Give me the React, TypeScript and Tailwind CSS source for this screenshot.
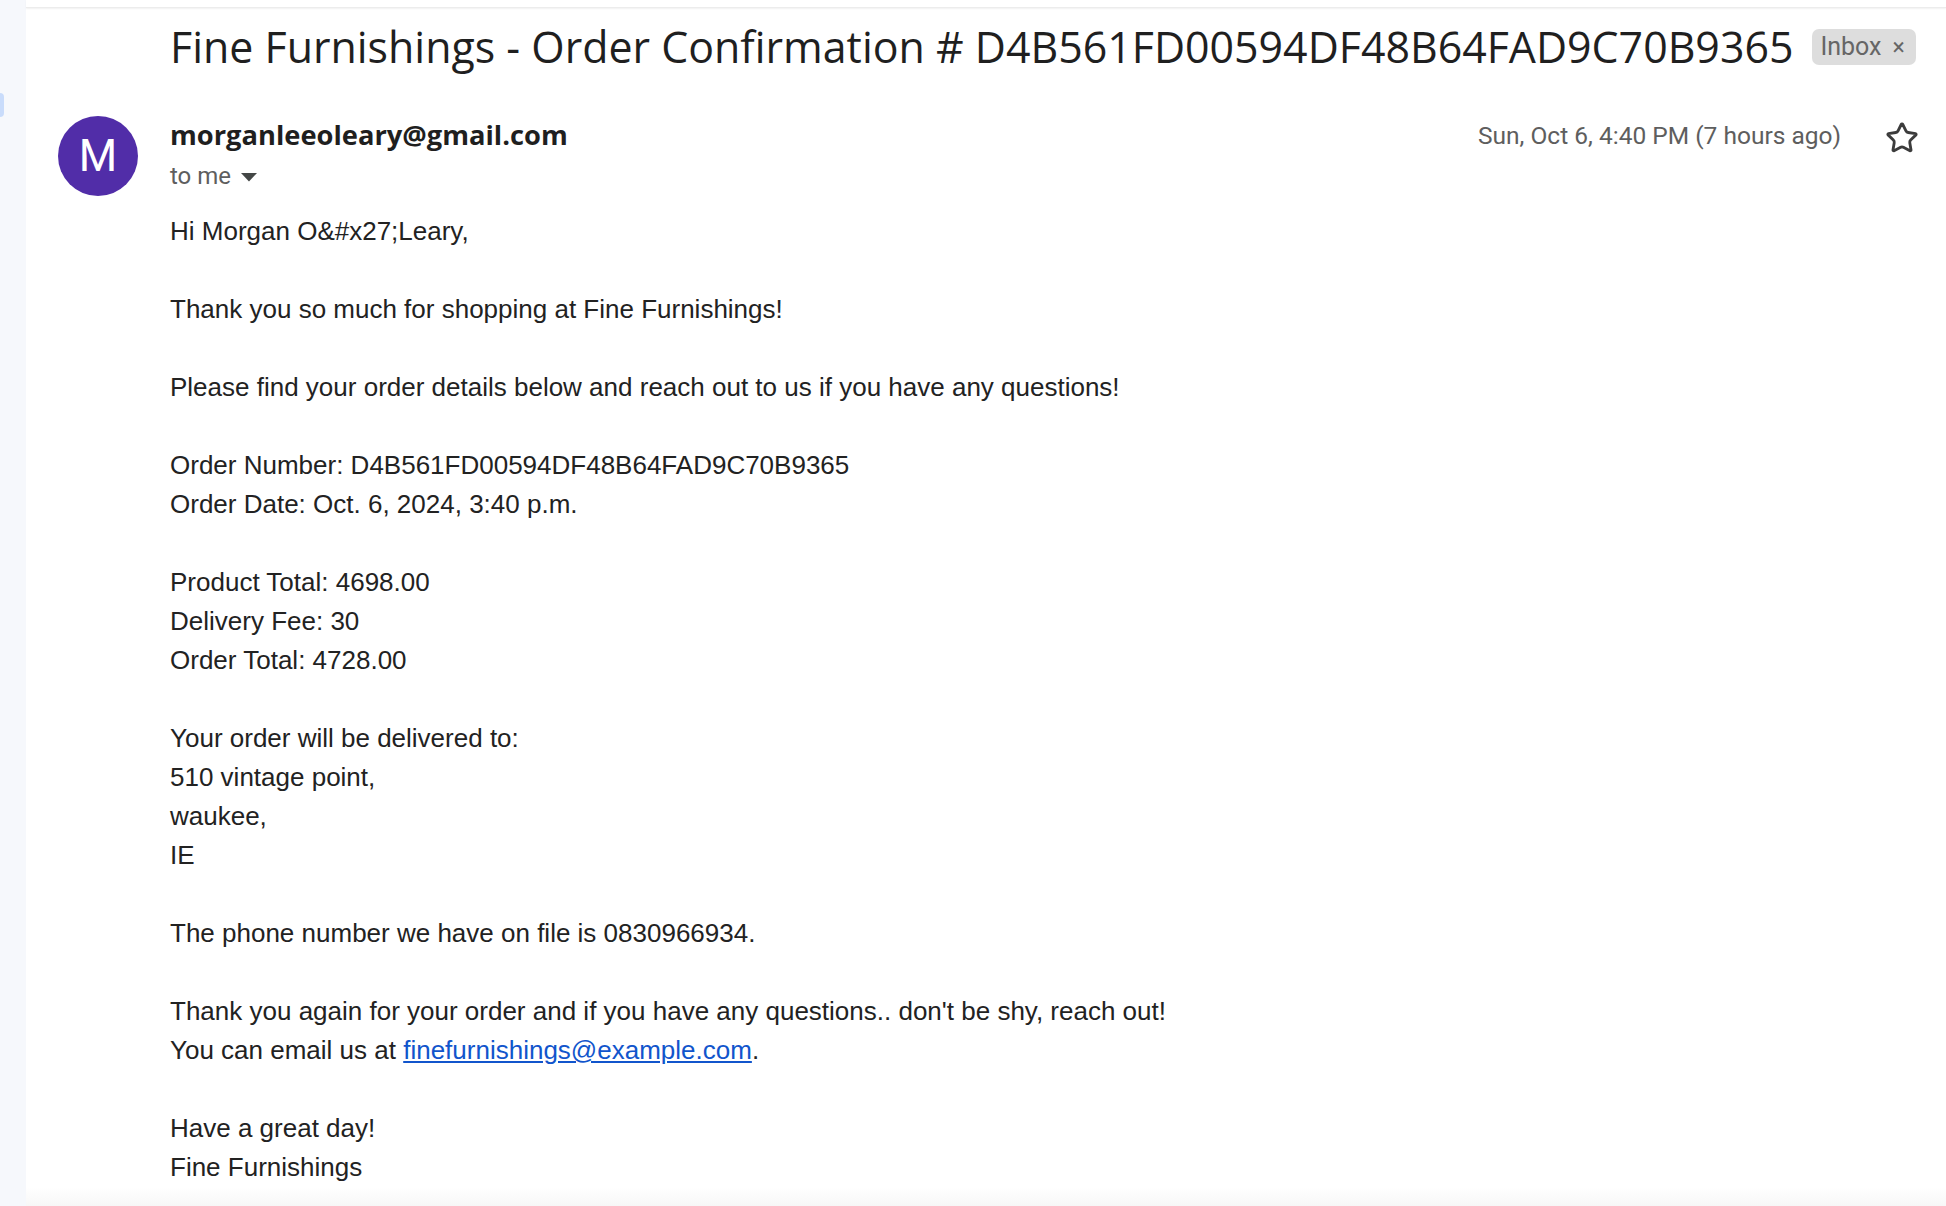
import { Star } from 'lucide-react';

const bodyLines: (string | null)[] = [
  'Hi Morgan O&#x27;Leary,',
  null,
  'Thank you so much for shopping at Fine Furnishings!',
  null,
  'Please find your order details below and reach out to us if you have any questions!',
  null,
  'Order Number: D4B561FD00594DF48B64FAD9C70B9365',
  'Order Date: Oct. 6, 2024, 3:40 p.m.',
  null,
  'Product Total: 4698.00',
  'Delivery Fee: 30',
  'Order Total: 4728.00',
  null,
  'Your order will be delivered to:',
  '510 vintage point,',
  'waukee,',
  'IE',
  null,
  'The phone number we have on file is 0830966934.',
  null,
  "Thank you again for your order and if you have any questions.. don't be shy, reach out!",
  'LINK',
  null,
  'Have a great day!',
  'Fine Furnishings',
];

export default function App() {
  return (
    <div className="flex h-[1206px] w-[1946px] overflow-hidden bg-[#f6f8fc]">
      <div className="w-[26px] shrink-0">
        <div className="mt-[93px] h-[24px] w-[4px] rounded-r-full bg-[#c9dcfb]" />
      </div>

      <div className="flex flex-1 flex-col rounded-bl-[18px] bg-white">
        <div className="h-[11px] border-b border-[#ececec] shadow-[0_1px_2px_rgba(0,0,0,0.06)]" />

        {/* subject */}
        <div className="mt-[12px] flex items-center pl-[144px]">
          <h2 className="text-[42.9px] leading-[54px] text-[#1f1f1f] [font-family:'Open_Sans',sans-serif]">
            Fine Furnishings - Order Confirmation # D4B561FD00594DF48B64FAD9C70B9365
          </h2>
          <span className="ml-[19px] flex h-[36px] items-center rounded-[7px] bg-[#dddddd] pl-[8px] pr-[11px] text-[25px] text-[#666666] [font-family:Roboto,sans-serif]">
            Inbox
            <span className="ml-[11px] text-[23px] leading-none">×</span>
          </span>
        </div>

        {/* sender row */}
        <div className="mt-[42px] flex pl-[32px] pr-[24px]">
          <div className="flex h-[80px] w-[80px] shrink-0 items-center justify-center rounded-full bg-[#512da8] text-[44px] text-white [font-family:Roboto,sans-serif]">
            M
          </div>
          <div className="ml-[32px] flex-1">
            <div className="flex items-start justify-between">
              <div>
                <div className="mt-[1px] text-[27.3px] font-bold leading-[36px] text-[#1f1f1f] [font-family:'Open_Sans',sans-serif]">
                  morganleeoleary@gmail.com
                </div>
                <div className="mt-[7px] flex items-center text-[24px] leading-[32px] text-[#5e5e5e] [font-family:Roboto,sans-serif]">
                  to me
                  <svg width="16" height="9" viewBox="0 0 16 9" className="ml-[10px] mt-[2px]">
                    <path d="M0 0 L16 0 L8 8.5 Z" fill="#444746" />
                  </svg>
                </div>
              </div>
              <div className="flex items-center">
                <span className="mt-[-3px] text-[24.5px] leading-[34px] text-[#5e5e5e] [font-family:Roboto,sans-serif]">
                  Sun, Oct 6, 4:40 PM (7 hours ago)
                </span>
                <span className="ml-[41px] mt-[2px] flex h-[40px] w-[40px] items-center justify-center">
                  <Star size={34} strokeWidth={2} color="#3c3c3c" />
                </span>
              </div>
            </div>

            {/* message body */}
            <div className="mt-[20px] text-[26px] leading-[39px] text-[#222222] [font-family:'Liberation_Sans',Arial,sans-serif]">
              {bodyLines.map((line, i) =>
                line === null ? (
                  <div key={i} className="h-[39px]" />
                ) : line === 'LINK' ? (
                  <div key={i}>
                    You can email us at{' '}
                    <a href="#" className="text-[#1155cc] underline">
                      finefurnishings@example.com
                    </a>
                    .
                  </div>
                ) : (
                  <div key={i}>{line}</div>
                ),
              )}
            </div>
          </div>
        </div>

        <div className="mt-auto h-[26px] bg-gradient-to-b from-white to-[#f7f7f7]" />
      </div>
    </div>
  );
}
